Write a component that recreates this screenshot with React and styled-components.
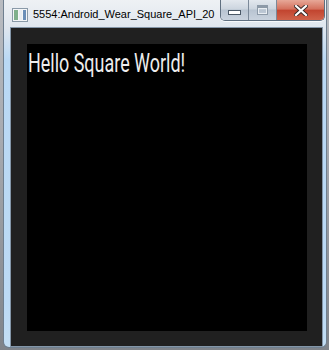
import React from 'react'
import styled, { createGlobalStyle } from 'styled-components'

const Global = createGlobalStyle`
  html, body {
    margin: 0;
    padding: 0;
    width: 329px;
    height: 350px;
    overflow: hidden;
    background: #8d9096;
  }
  #root {
    height: 350px;
  }
`

export default function App() {
  return (
    <>
      <Global />
      <Desktop>
        <Window>
          <TitleBar>
            <AppIcon>
              <svg width="16" height="14" viewBox="0 0 16 14">
                <rect x="0.5" y="0.5" width="15" height="13" fill="#f4f6f8" stroke="#8a9aa8" />
                <rect x="2" y="2" width="4" height="10" fill="#7fb08c" />
                <rect x="7" y="2" width="3" height="10" fill="#e9eef2" />
                <rect x="11" y="2" width="3" height="10" fill="#6b8fb8" />
              </svg>
            </AppIcon>
            <Title>5554:Android_Wear_Square_API_20</Title>
            <Controls>
              <CtrlButton>
                <MinGlyph />
              </CtrlButton>
              <CtrlButton>
                <MaxGlyph />
              </CtrlButton>
              <CloseButton>
                <svg width="14" height="11" viewBox="0 0 14 11">
                  <path d="M2 1 L12 10 M12 1 L2 10" stroke="#3a2a28" strokeWidth="4" strokeLinecap="square" />
                  <path d="M2 1 L12 10 M12 1 L2 10" stroke="#ffffff" strokeWidth="2.2" strokeLinecap="square" />
                </svg>
              </CloseButton>
            </Controls>
          </TitleBar>
          <Client>
            <Screen>
              <Hello>Hello Square World!</Hello>
            </Screen>
          </Client>
        </Window>
      </Desktop>
    </>
  )
}

const Desktop = styled.div`
  width: 329px;
  height: 350px;
  background: linear-gradient(180deg, #b9bcc1 0%, #a7aab0 40%, #7f8389 100%);
`

const Window = styled.div`
  margin-left: 3px;
  width: 324px;
  height: 348px;
  display: flex;
  flex-direction: column;
  border: 1px solid #6f7f8f;
  border-top: none;
  box-sizing: border-box;
  border-radius: 0 0 6px 6px;
  background: linear-gradient(180deg, #eef1f4 0px, #dfe6ee 28px, #b9d8f4 60px, #bcdaf5 300px, #c3def4 348px);
`

const TitleBar = styled.div`
  height: 28px;
  display: flex;
  align-items: flex-start;
  position: relative;
`

const AppIcon = styled.div`
  margin: 8px 0 0 8px;
  width: 16px;
  height: 14px;
  display: flex;
`

const Title = styled.div`
  margin: 6px 0 0 5px;
  font-family: "Liberation Sans", Arial, sans-serif;
  font-size: 11px;
  line-height: 16px;
  color: #000;
  white-space: nowrap;
`

const Controls = styled.div`
  position: absolute;
  top: 0;
  right: 1px;
  display: flex;
  height: 20px;
  border: 1px solid #5f6f80;
  border-top: none;
  border-radius: 0 0 5px 5px;
  overflow: hidden;
  box-shadow: 0 1px 0 rgba(255, 255, 255, 0.7);
`

const CtrlButton = styled.div`
  width: 27px;
  height: 20px;
  display: flex;
  align-items: center;
  justify-content: center;
  background: linear-gradient(180deg, #e3e8ee 0%, #ccd5df 45%, #b8c4d1 50%, #c9d3de 100%);
  border-right: 1px solid #7b8999;
`

const MinGlyph = styled.div`
  width: 11px;
  height: 3px;
  margin-top: 4px;
  background: #fff;
  border: 1px solid #4a5866;
`

const MaxGlyph = styled.div`
  width: 9px;
  height: 6px;
  border: 1px solid #8d9aa8;
  border-top-width: 3px;
  background: transparent;
  box-shadow: inset 0 0 0 1px #e8edf2;
`

const CloseButton = styled.div`
  width: 47px;
  height: 20px;
  display: flex;
  align-items: center;
  justify-content: center;
  background: linear-gradient(180deg, #e7a898 0%, #d4715d 45%, #c24530 52%, #d0634b 100%);
`

const Client = styled.div`
  margin: 1px 3px 0 6px;
  height: 313px;
  background: #202020;
  border: 1px solid #8496a8;
  padding: 16px 15px 15px 16px;
  display: flex;
`

const Screen = styled.div`
  flex: 1;
  background: #000;
  overflow: hidden;
`

const Hello = styled.div`
  display: inline-block;
  margin: 4px 0 0 1px;
  font-family: Roboto, "Noto Sans", sans-serif;
  font-size: 26px;
  font-weight: 400;
  line-height: 30px;
  color: #ededed;
  white-space: nowrap;
  transform: scaleX(0.69);
  transform-origin: left center;
`
